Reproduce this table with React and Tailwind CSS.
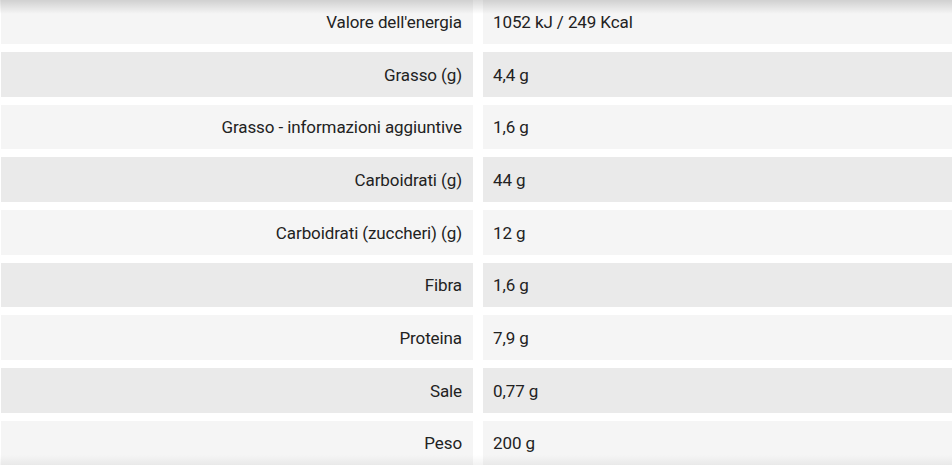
import React from "react";

const rows = [
  ["Valore dell'energia", "1052 kJ / 249 Kcal"],
  ["Grasso (g)", "4,4 g"],
  ["Grasso - informazioni aggiuntive", "1,6 g"],
  ["Carboidrati (g)", "44 g"],
  ["Carboidrati (zuccheri) (g)", "12 g"],
  ["Fibra", "1,6 g"],
  ["Proteina", "7,9 g"],
  ["Sale", "0,77 g"],
  ["Peso", "200 g"],
];

export default function App() {
  return (
    <div className="relative w-[952px] h-[465px] overflow-hidden bg-white" style={{ fontFamily: "Roboto, 'Noto Sans', sans-serif" }}>
      <div className="mt-[-0.7px] pl-[1px] flex flex-col gap-[8px]">
        {rows.map(([k, v], i) => (
          <div key={i} className="grid grid-cols-[472px_1fr] gap-x-[10px] h-[44.7px]">
            <div className={`flex items-center justify-end pr-[11px] pt-[2px] text-[17px] tracking-[-0.1px] text-[#222] ${i % 2 === 0 ? "bg-[#f5f5f5]" : "bg-[#eaeaea]"}`}>
              {k}
            </div>
            <div className={`flex items-center pl-[10px] pt-[2px] text-[17px] tracking-[-0.1px] text-[#222] ${i % 2 === 0 ? "bg-[#f5f5f5]" : "bg-[#eaeaea]"}`}>
              {v}
            </div>
          </div>
        ))}
      </div>
      <div className="pointer-events-none absolute top-0 left-0 right-0 h-[14px] bg-gradient-to-b from-black/15 to-transparent" />
      <div className="pointer-events-none absolute bottom-0 left-0 right-0 h-[10px] bg-gradient-to-t from-black/5 to-transparent" />
    </div>
  );
}
